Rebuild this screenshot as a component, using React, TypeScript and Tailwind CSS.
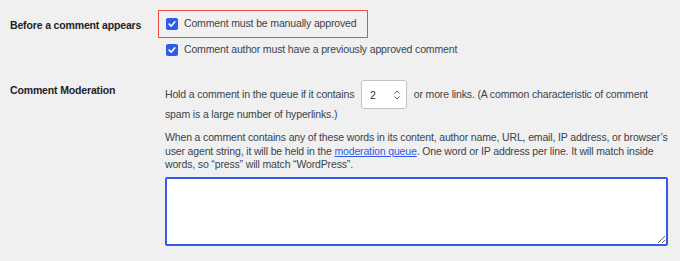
import React from "react";

const CheckBox = () => (
  <span className="inline-flex h-[12px] w-[12px] shrink-0 items-center justify-center rounded-[2px] bg-[#2f5bea]">
    <svg viewBox="0 0 12 12" className="h-[10px] w-[10px]">
      <path d="M2.6 6.2 L5 8.6 L9.4 3.4" fill="none" stroke="#fff" strokeWidth="1.9" strokeLinecap="round" strokeLinejoin="round" />
    </svg>
  </span>
);

const NumberBox = () => (
  <span className="relative -my-[5px] mx-[4px] inline-flex h-[29px] w-[46px] items-center rounded-[3px] border border-[#c3c4c7] bg-white pl-[8px] align-middle text-[#2c3338]">
    2
    <svg viewBox="0 0 10 14" className="absolute right-[5px] top-[8px] h-[12px] w-[8px]">
      <path d="M2 5 L5 2 L8 5 M2 9 L5 12 L8 9" fill="none" stroke="#50575e" strokeWidth="1.1" strokeLinecap="round" strokeLinejoin="round" />
    </svg>
  </span>
);

export default function App() {
  return (
    <div className="h-[261px] w-[680px] overflow-hidden bg-[#f0f0f1] font-['Liberation_Sans',Arial,sans-serif] text-[10.5px] tracking-[-0.15px] text-[#3c434a]">
      {/* Before a comment appears */}
      <div className="flex pt-[10px]">
        <div className="w-[158px] shrink-0 whitespace-nowrap pl-[10px] pt-[8px] font-bold text-[#1d2327]">
          Before a comment appears
        </div>
        <div className="flex flex-col">
          <div className="flex h-[28px] w-[210px] items-center gap-[6px] whitespace-nowrap border-[1.5px] border-[#ef4b45] pl-[7px]">
            <CheckBox />
            <span>Comment must be manually approved</span>
          </div>
          <div className="mt-[4px] flex items-center gap-[6px] whitespace-nowrap pl-[8px]">
            <CheckBox />
            <span>Comment author must have a previously approved comment</span>
          </div>
        </div>
      </div>

      {/* Comment Moderation */}
      <div className="mt-[22px] flex">
        <div className="w-[165px] shrink-0 whitespace-nowrap pl-[10px] pt-[3px] font-bold text-[#1d2327]">
          Comment Moderation
        </div>
        <div className="flex-1 pr-[8px]">
          <p className="pt-[4px] leading-[20px]">
            Hold a comment in the queue if it contains <NumberBox /> or more links. (A common characteristic of comment spam is a large number of hyperlinks.)
          </p>
          <p className="mt-[7px] leading-[13.5px]">
            When a comment contains any of these words in its content, author name, URL, email, IP address, or browser’s user agent string, it will be held in the{" "}
            <a className="text-[#2f5bea] underline">moderation queue</a>. One word or IP address per line. It will match inside words, so “press” will match “WordPress”.
          </p>
          <textarea className="mt-[5px] block h-[69px] w-[503px] resize-y rounded-[2px] border-2 border-[#3858e9] bg-white outline-none" />
        </div>
      </div>
    </div>
  );
}
